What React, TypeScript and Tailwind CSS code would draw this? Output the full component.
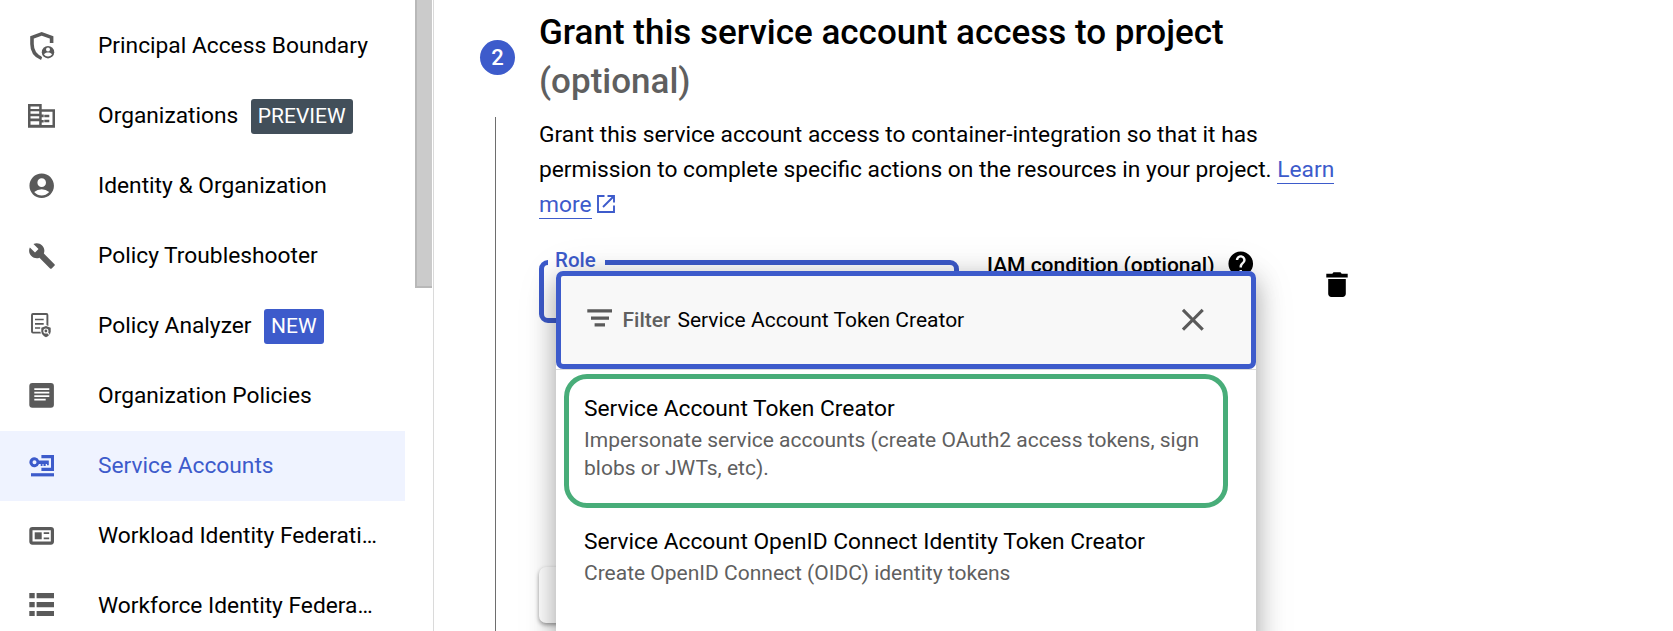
import type { ReactNode } from "react";
import { MdAccountCircle, MdBuild, MdClose, MdHelp } from "react-icons/md";

const NAV_ICON = "h-8 w-8 shrink-0";

function ShieldPersonIcon() {
  return (
    <svg viewBox="0 0 32 32" className={NAV_ICON} fill="none">
      <path d="M25.6 13V7.4L15.7 3.8 6 7.4V14c0 6.6 3.6 12 9.7 14.4" stroke="currentColor" strokeWidth="3.6" />
      <circle cx="22" cy="22.2" r="8" fill="#fff" />
      <circle cx="22" cy="22.2" r="6.2" fill="currentColor" />
      <circle cx="22" cy="19.6" r="2" fill="#fff" />
      <path d="M18 24.6c.8-1.4 2.4-2 4-2s3.200.6 4 2c-1 1.300-2.400 2-4 2s-3-.7-4-2z" fill="#fff" />
    </svg>
  );
}

function OrganizationIcon() {
  return (
    <svg viewBox="0 0 32 32" className={NAV_ICON} fill="currentColor">
      <path
        fillRule="evenodd"
        d="M2 4h13.700v5.300H29V27.700H2zM4.500 6.500v2.400h8.700V6.500zM4.500 11.300v2.400h8.700v-2.400zM4.500 16.200v2.400h8.700v-2.400zM4.500 21.200v3.600h8.700v-3.600zM15.700 11.800v2.800h2v2.700h-2v2.600h2v2.600h-2v2.600h10.800V11.800z"
      />
      <path d="M18.300 14.700h5v2.500h-5zM18.300 19.700h5v2.500h-5z" />
    </svg>
  );
}

function AnalyzerIcon() {
  return (
    <svg viewBox="0 0 32 32" className={NAV_ICON} fill="none">
      <rect x="6" y="4" width="15.400" height="18.600" rx="1" stroke="currentColor" strokeWidth="1.900" />
      <path d="M9 9.500h8.700M9 13.800h8.700M9 18h5.500" stroke="currentColor" strokeWidth="1.700" />
      <path d="M20 15l5.600 2.300v4c0 3.400-2.400 5.600-5.600 6.900-3.200-1.300-5.600-3.500-5.600-6.900v-4z" fill="#fff" />
      <path d="M20 15.900l4.700 1.900v3.500c0 2.800-2 4.800-4.700 5.900-2.700-1.100-4.700-3.100-4.700-5.900v-3.500z" fill="currentColor" />
      <circle cx="19.900" cy="21" r="2" stroke="#fff" strokeWidth="1.200" />
      <path d="M21.300 22.400l2 2.200" stroke="#fff" strokeWidth="1.200" />
    </svg>
  );
}

function ArticleIcon() {
  return (
    <svg viewBox="0 0 32 32" className={NAV_ICON}>
      <rect x="3.300" y="3.100" width="24.600" height="24.700" rx="3" fill="currentColor" />
      <path d="M8.300 9.200h15M8.300 12.700h15M8.300 16.200h15M8.300 19.700h11.400" stroke="#fff" strokeWidth="1.700" />
    </svg>
  );
}

function ServiceAccountIcon() {
  return (
    <svg viewBox="0 0 32 32" className={NAV_ICON} fill="currentColor">
      <path d="M15.400 5H28v16H15.400v-3.200H25V8.200h-9.600z" />
      <path d="M5 23.200h23v3.200H5z" />
      <path
        fillRule="evenodd"
        d="M13 10.400h9.800v4.800h-1.800v-1.200h-1.300v2h-2.200v-2h-1v2h-1.800v-2H13a5 5 0 1 1 0-3.600zM8.500 10.300a2 2 0 1 0 0 4 2 2 0 0 0 0-4z"
      />
    </svg>
  );
}

function IdCardIcon() {
  return (
    <svg viewBox="0 0 32 32" className={NAV_ICON} fill="none">
      <rect x="4.900" y="8.600" width="21.500" height="14.500" rx="1.500" stroke="currentColor" strokeWidth="3.200" />
      <path d="M8.700 12.300h7v7h-7z" fill="currentColor" />
      <path d="M17.700 13.100h5.500M17.700 18.300h5.500" stroke="currentColor" strokeWidth="1.700" />
    </svg>
  );
}

function ListIcon() {
  return (
    <svg viewBox="0 0 32 32" className={NAV_ICON} fill="currentColor">
      <path d="M3.300 3.100h5.400v5.200H3.300zM10.600 3.100H28v5.200H10.600zM3.300 12h5.400v5.200H3.300zM10.600 12H28v5.200H10.600zM3.300 20.900h5.400v5.200H3.300zM10.600 20.900H28v5.200H10.600z" />
    </svg>
  );
}

function Boxed({ children }: { children: ReactNode }) {
  return <span className="flex h-8 w-8 shrink-0 items-center justify-center pb-px">{children}</span>;
}

type NavItem = {
  label: string;
  icon: ReactNode;
  badge?: { text: string; className: string };
  active?: boolean;
};

const NAV: NavItem[] = [
  { label: "Principal Access Boundary", icon: <ShieldPersonIcon /> },
  { label: "Organizations", icon: <OrganizationIcon />, badge: { text: "PREVIEW", className: "bg-[#424f5a]" } },
  { label: "Identity & Organization", icon: <Boxed><MdAccountCircle size={29.4} /></Boxed> },
  { label: "Policy Troubleshooter", icon: <Boxed><MdBuild size={28} /></Boxed> },
  { label: "Policy Analyzer", icon: <AnalyzerIcon />, badge: { text: "NEW", className: "bg-[#3d5bcb]" } },
  { label: "Organization Policies", icon: <ArticleIcon /> },
  { label: "Service Accounts", icon: <ServiceAccountIcon />, active: true },
  { label: "Workload Identity Federati…", icon: <IdCardIcon /> },
  { label: "Workforce Identity Federa…", icon: <ListIcon /> },
];

function Sidebar() {
  return (
    <aside className="flex h-full w-[434px] shrink-0 border-r border-[#dadada]">
      <nav className="flex w-[405px] flex-col pt-[11px]">
        {NAV.map((item) => (
          <a
            key={item.label}
            className={`flex h-[70px] shrink-0 items-center pl-[26px] ${item.active ? "bg-[#eff3ff] text-[#3d5bcb]" : "text-[#5a5a5a]"}`}
          >
            {item.icon}
            <span className={`ml-10 pb-[2px] text-[22.75px] leading-[35px] whitespace-nowrap ${item.active ? "" : "text-black"}`}>
              {item.label}
            </span>
            {item.badge && (
              <span className={`ml-[12.5px] mt-px flex h-[35px] items-center rounded-[3px] px-[7px] text-[21px] text-white ${item.badge.className}`}>
                {item.badge.text}
              </span>
            )}
          </a>
        ))}
      </nav>
      <div className="ml-[10px] h-[288px] w-[17px] border-b-2 border-l-2 border-[#b8b8b8] bg-[#cbcbcb]" />
    </aside>
  );
}

function ExternalLinkIcon() {
  return (
    <svg viewBox="0 0 18 18" className="ml-[5px] inline-block h-[18px] w-[18px] align-[-1px]" fill="none" stroke="currentColor" strokeWidth="1.900">
      <path d="M7.500 1H1v16h16v-6.500M10.500 1H17v6.500M17 1L6 12" />
    </svg>
  );
}

function RoleMenu() {
  return (
    <div className="absolute top-[11px] left-[17px] h-[500px] w-[700px] rounded-t-[7px] bg-white shadow-[0_9px_26px_rgba(0,0,0,0.3),0_4px_44px_rgba(0,0,0,0.1)]">
      <div className="border-b border-[#dadada]">
        <div className="flex h-[98px] items-center rounded-[7px] border-[5px] border-[#3d5bcb] bg-[#f8f8f8] pl-[26px] text-[21px]">
          <svg viewBox="0 0 25 18" className="mt-[-5px] h-[18px] w-[25px]" fill="#5a5a5a">
            <path d="M.3.300H25v3.300H.3zM4 7.400h18v3.300H4zM7.600 14.300H18v3.300H7.600z" />
          </svg>
          <span className="ml-[10.5px] pt-[2px] font-medium text-[#5f5f5f]">Filter</span>
          <span className="ml-[7px] pt-[2px] text-black">Service Account Token Creator</span>
          <MdClose size={37.7} className="mr-[39px] ml-auto text-[#5a5a5a]" />
        </div>
      </div>
      <div className="mt-[4px] ml-[8px] h-[134px] w-[664px] rounded-[23px] border-[5.500px] border-[#48ad79] pt-[14px] pl-[15px]">
        <div className="text-[22.75px] leading-[32px] text-black">Service Account Token Creator</div>
        <div className="mt-px text-[21px] leading-[28px] text-[#5f5f5f]">
          Impersonate service accounts (create OAuth2 access tokens, sign
          <br />
          blobs or JWTs, etc).
        </div>
      </div>
      <div className="mt-[18px] ml-[28px]">
        <div className="text-[22.75px] leading-[32px] text-black">Service Account OpenID Connect Identity Token Creator</div>
        <div className="mt-px text-[21px] leading-[28px] text-[#5f5f5f]">Create OpenID Connect (OIDC) identity tokens</div>
      </div>
    </div>
  );
}

export default function App() {
  return (
    <div className="flex h-[631px] w-[1673px] overflow-hidden bg-white font-['Roboto','Liberation_Sans',sans-serif] text-black">
      <Sidebar />
      <main className="flex min-w-0 flex-1 pl-[46px]">
        <div className="flex h-full w-[35px] shrink-0 flex-col items-center pt-[40px]">
          <div className="flex h-[35px] w-[35px] items-center justify-center rounded-full bg-[#3d5bcb] text-[22px] font-medium text-white">2</div>
          <div className="mt-[42px] mr-[4px] w-px flex-1 bg-[#6e6e6e]" />
        </div>
        <section className="ml-[24px] w-[812px] pt-[8px]">
          <h2 className="text-[35px] leading-[49px] font-medium">
            Grant this service account access to project
            <br />
            <span className="text-[#5f5f5f]">(optional)</span>
          </h2>
          <p className="mt-[11px] text-[22.75px] leading-[35px] whitespace-nowrap">
            Grant this service account access to container-integration so that it has
            <br />
            permission to complete specific actions on the resources in your project.{" "}
            <a className="border-b border-[#3d5bcb] text-[#3d5bcb]">Learn</a>
            <br />
            <a className="text-[#3d5bcb]">
              <span className="border-b border-[#3d5bcb]">more</span>
              <ExternalLinkIcon />
            </a>
          </p>
          <div className="relative mt-[38px] flex items-start">
            <div className="relative h-[63px] w-[420px] rounded-[9px] border-[5px] border-[#3d5bcb]">
              <span className="absolute top-[-18px] left-[4px] bg-white pr-[9px] pl-[7px] text-[20.500px] leading-[26px] font-medium text-[#3d5bcb]">Role</span>
            </div>
            <div className="ml-[28px] mt-[-12px] flex items-center text-[21px] leading-[30px] font-medium">
              <span className="pt-[2px]">IAM condition (optional)</span>
              <MdHelp size={29.5} className="ml-[11px]" />
            </div>
            <svg viewBox="0 0 22 25" className="mt-[12px] ml-auto mr-[3px] h-[25px] w-[22px]" fill="currentColor">
              <path d="M.3 1.800h6L7.500.2h7l1.200 1.600h6v3.600H.3zM2.200 7h17.600v14.700c0 2-1.300 3.200-3.200 3.200H5.400c-1.900 0-3.200-1.200-3.200-3.200z" />
            </svg>
            <RoleMenu />
          </div>
          <button className="mt-[244px] block h-[56px] w-[120px] rounded-[7px] bg-white shadow-[0_2px_4px_rgba(0,0,0,0.4)]" />
        </section>
      </main>
    </div>
  );
}
